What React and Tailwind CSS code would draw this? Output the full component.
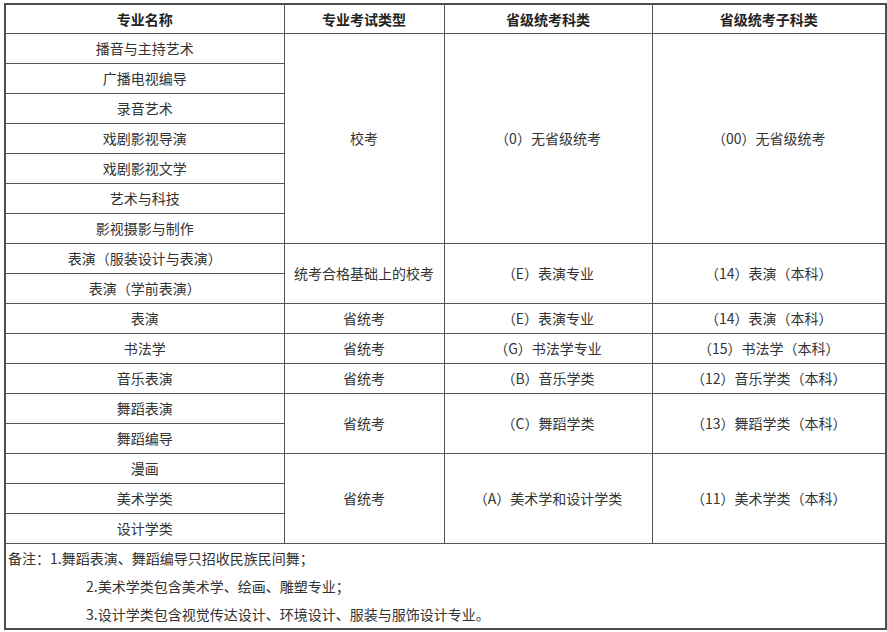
const rows = [
  [
    { t: "播音与主持艺术" },
    { t: "校考", rs: 7 },
    { t: "（0）无省级统考", rs: 7 },
    { t: "（00）无省级统考", rs: 7 },
  ],
  [{ t: "广播电视编导" }],
  [{ t: "录音艺术" }],
  [{ t: "戏剧影视导演" }],
  [{ t: "戏剧影视文学" }],
  [{ t: "艺术与科技" }],
  [{ t: "影视摄影与制作" }],
  [
    { t: "表演（服装设计与表演）" },
    { t: "统考合格基础上的校考", rs: 2 },
    { t: "（E）表演专业", rs: 2 },
    { t: "（14）表演（本科）", rs: 2 },
  ],
  [{ t: "表演（学前表演）" }],
  [{ t: "表演" }, { t: "省统考" }, { t: "（E）表演专业" }, { t: "（14）表演（本科）" }],
  [{ t: "书法学" }, { t: "省统考" }, { t: "（G）书法学专业" }, { t: "（15）书法学（本科）" }],
  [{ t: "音乐表演" }, { t: "省统考" }, { t: "（B）音乐学类" }, { t: "（12）音乐学类（本科）" }],
  [
    { t: "舞蹈表演" },
    { t: "省统考", rs: 2 },
    { t: "（C）舞蹈学类", rs: 2 },
    { t: "（13）舞蹈学类（本科）", rs: 2 },
  ],
  [{ t: "舞蹈编导" }],
  [
    { t: "漫画" },
    { t: "省统考", rs: 3 },
    { t: "（A）美术学和设计学类", rs: 3 },
    { t: "（11）美术学类（本科）", rs: 3 },
  ],
  [{ t: "美术学类" }],
  [{ t: "设计学类" }],
];

const headers = ["专业名称", "专业考试类型", "省级统考科类", "省级统考子科类"];

export default function App() {
  return (
    <div
      className="w-[887px] h-[632px] bg-white pt-[3px] pl-[4px] text-[14px] text-[#333]"
      style={{ fontFamily: '"Noto Sans CJK SC", "Noto Sans", sans-serif' }}
    >
      <table className="border-collapse table-fixed w-[881px] border-2 border-[#4d4d4d]">
        <colgroup>
          <col className="w-[279px]" />
          <col className="w-[160px]" />
          <col className="w-[208px]" />
          <col className="w-[234px]" />
        </colgroup>
        <tbody>
          <tr className="h-[29px]">
            {headers.map((h) => (
              <td
                key={h}
                className="border border-[#555] text-center font-bold text-[#222] p-0 leading-none"
              >
                {h}
              </td>
            ))}
          </tr>
          {rows.map((r, i) => (
            <tr key={i} className="h-[30px]">
              {r.map((c, j) => (
                <td
                  key={j}
                  rowSpan={c.rs || 1}
                  className="border border-[#555] text-center p-0 leading-none"
                >
                  {c.t}
                </td>
              ))}
            </tr>
          ))}
          <tr className="h-[86px]">
            <td colSpan={4} className="border border-[#555] p-0 pl-[2px] align-top leading-[28px]">
              <div>备注：1.舞蹈表演、舞蹈编导只招收民族民间舞；</div>
              <div className="pl-[78px]">2.美术学类包含美术学、绘画、雕塑专业；</div>
              <div className="pl-[78px]">3.设计学类包含视觉传达设计、环境设计、服装与服饰设计专业。</div>
            </td>
          </tr>
        </tbody>
      </table>
    </div>
  );
}
